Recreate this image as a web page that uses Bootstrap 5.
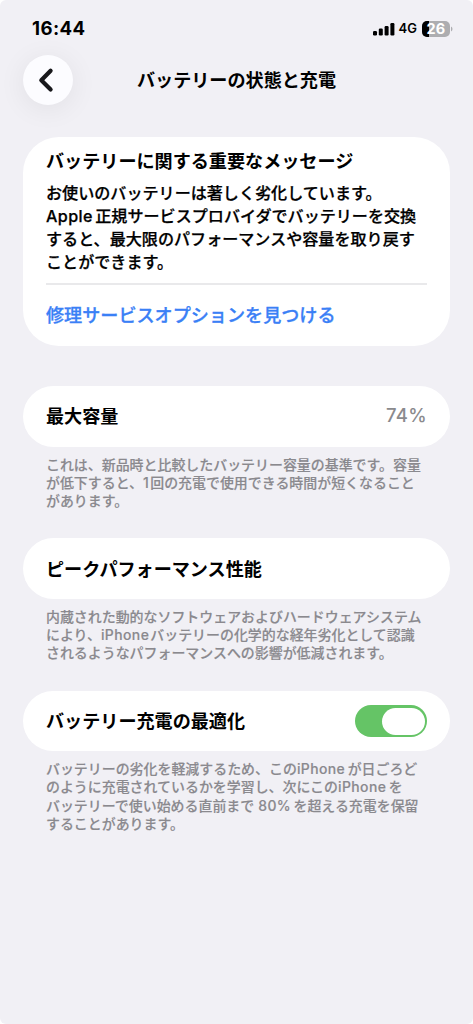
<!DOCTYPE html>
<html lang="ja">
<head>
<meta charset="utf-8">
<meta name="viewport" content="width=device-width, initial-scale=1">
<title>バッテリーの状態と充電</title>
<link href="https://cdn.jsdelivr.net/npm/bootstrap@5.3.0/dist/css/bootstrap.min.css" rel="stylesheet">
<style>
  body { background: #fff; font-family: Inter, "Noto Sans CJK JP", sans-serif; color: #000; }
  .screen { height: 1024px; background: #f1f0f5; border-radius: 6px; overflow: hidden; }
  .status { height: 55px; padding: 2px 20px 0 32px; }
  .clock { font-size: 18.6px; font-weight: 700; letter-spacing: .4px; line-height: 1; }
  .net { font-size: 13px; font-weight: 600; line-height: 1; }
  .topbar { height: 50px; padding: 0 23px; }
  .back { width: 50px; height: 50px; background: #fcfcff; box-shadow: 0 4px 28px rgba(0,0,0,.07); }
  .heading { font-size: 18.1px; font-weight: 700; line-height: 24px; white-space: nowrap; }
  .title { margin-right: 50px; }
  .panel { margin: 0 23px; padding: 0 23px; background: #fff; border: 0; border-radius: 30.5px; }
  .notice { height: 209px; margin-top: 32px; border-radius: 36px; padding-top: 12px; }
  .message { font-size: 16.08px; font-weight: 500; line-height: 23px; margin-top: 9px; -webkit-text-stroke: .25px; }
  .ln { display: block; white-space: nowrap; width: max-content; }
  .en { letter-spacing: .42px; }
  .ln .en { margin: 0 2px 0 2.4px; }
  .ln .en:first-child { margin-left: 0; margin-right: 2.4px; }
  .ln .en.tight { margin: 0 1px 0 0; }
  .rule { height: 1.5px; background: #e9e9eb; margin-top: 9px; }
  .service { font-size: 18.1px; font-weight: 500; line-height: 24px; color: #3a80f6; margin-top: 18.5px; -webkit-text-stroke: .3px; }
  .setting { height: 60.5px; padding-top: 1px; }
  .percent { font-size: 18.5px; font-weight: 500; letter-spacing: .3px; color: #8a8a8d; }
  .foot { margin: 9px 46px 0; font-size: 13.94px; font-weight: 500; line-height: 18.2px; color: #8a898e; -webkit-text-stroke: .15px; }
  .toggle { width: 72px; height: 32px; background: #65c466; padding: 2.5px; }
  .knob { width: 42.5px; height: 27px; background: #fff; }
</style>
</head>
<body>
<div class="screen d-flex flex-column">
  <header>
    <div class="status d-flex align-items-center justify-content-between">
      <span class="clock">16:44</span>
      <div class="d-flex align-items-center">
        <svg width="22" height="14" viewBox="0 0 22 14" aria-hidden="true"><rect x="0" y="9" width="4" height="4.5" rx="1.2"/><rect x="5.8" y="6.5" width="4" height="7" rx="1.2"/><rect x="11.6" y="4" width="4" height="9.5" rx="1.2"/><rect x="17.4" y="1" width="4" height="12.5" rx="1.2"/></svg>
        <span class="net ms-1">4G</span>
        <svg class="ms-1" width="32" height="16" viewBox="0 0 32 16" aria-hidden="true"><defs><clipPath id="cell"><rect x="1" y="0" width="28" height="16" rx="5"/></clipPath></defs><g clip-path="url(#cell)"><path fill="#adadb0" d="M1 0h28v16H1z"/><path d="M1 0h7v16H1z"/></g><path fill="#adadb0" d="M30 5.5q1.5.8 1.5 2.5T30 10.5z"/><text x="14.8" y="13.1" text-anchor="middle" font-family="Inter" font-weight="700" font-size="14.5" fill="#fff">26</text></svg>
      </div>
    </div>
    <div class="topbar d-flex align-items-center">
      <div class="back rounded-circle d-flex align-items-center justify-content-center">
        <svg width="24" height="28" viewBox="0 0 24 28" fill="none" stroke="#18181b" stroke-width="4.2" stroke-linecap="round" stroke-linejoin="round" aria-hidden="true"><path d="M14.6 4.8 5.3 14.3l9.3 9.3"/></svg>
      </div>
      <h1 class="heading title flex-grow-1 mb-0 text-center">バッテリーの状態と充電</h1>
    </div>
  </header>
  <main>
    <section class="card panel notice">
      <h2 class="heading mb-0">バッテリーに関する重要なメッセージ</h2>
      <div class="message">
        <span class="ln">お使いのバッテリーは著しく劣化しています。</span>
        <span class="ln"><span class="en">Apple</span>正規サービスプロバイダでバッテリーを交換</span>
        <span class="ln">すると、最大限のパフォーマンスや容量を取り戻す</span>
        <span class="ln">ことができます。</span>
      </div>
      <div class="rule"></div>
      <div class="service">修理サービスオプションを見つける</div>
    </section>

    <section style="margin-top:40px">
      <div class="card panel setting pt-0 flex-row align-items-center justify-content-between"><span class="heading">最大容量</span><span class="percent">74%</span></div>
      <div class="foot">
        <span class="ln">これは、新品時と比較したバッテリー容量の基準です。容量</span>
        <span class="ln">が低下すると、<span class="en tight">1</span>回の充電で使用できる時間が短くなること</span>
        <span class="ln">があります。</span>
      </div>
    </section>

    <section style="margin-top:28px">
      <div class="card panel setting flex-row align-items-center"><span class="heading">ピークパフォーマンス性能</span></div>
      <div class="foot">
        <span class="ln">内蔵された動的なソフトウェアおよびハードウェアシステム</span>
        <span class="ln">により、<span class="en tight">iPhone</span>バッテリーの化学的な経年劣化として認識</span>
        <span class="ln">されるようなパフォーマンスへの影響が低減されます。</span>
      </div>
    </section>

    <section style="margin-top:28.5px">
      <div class="card panel setting flex-row align-items-center justify-content-between"><span class="heading">バッテリー充電の最適化</span>
        <span class="toggle rounded-pill d-flex justify-content-end"><span class="knob rounded-pill"></span></span></div>
      <div class="foot">
        <span class="ln">バッテリーの劣化を軽減するため、この<span class="en">iPhone</span>が日ごろど</span>
        <span class="ln">のように充電されているかを学習し、次にこの<span class="en">iPhone</span>を</span>
        <span class="ln">バッテリーで使い始める直前まで<span class="en ms-1">80%</span>を超える充電を保留</span>
        <span class="ln">することがあります。</span>
      </div>
    </section>
  </main>
</div>
<script src="https://cdn.jsdelivr.net/npm/bootstrap@5.3.0/dist/js/bootstrap.bundle.min.js"></script>
</body>
</html>
